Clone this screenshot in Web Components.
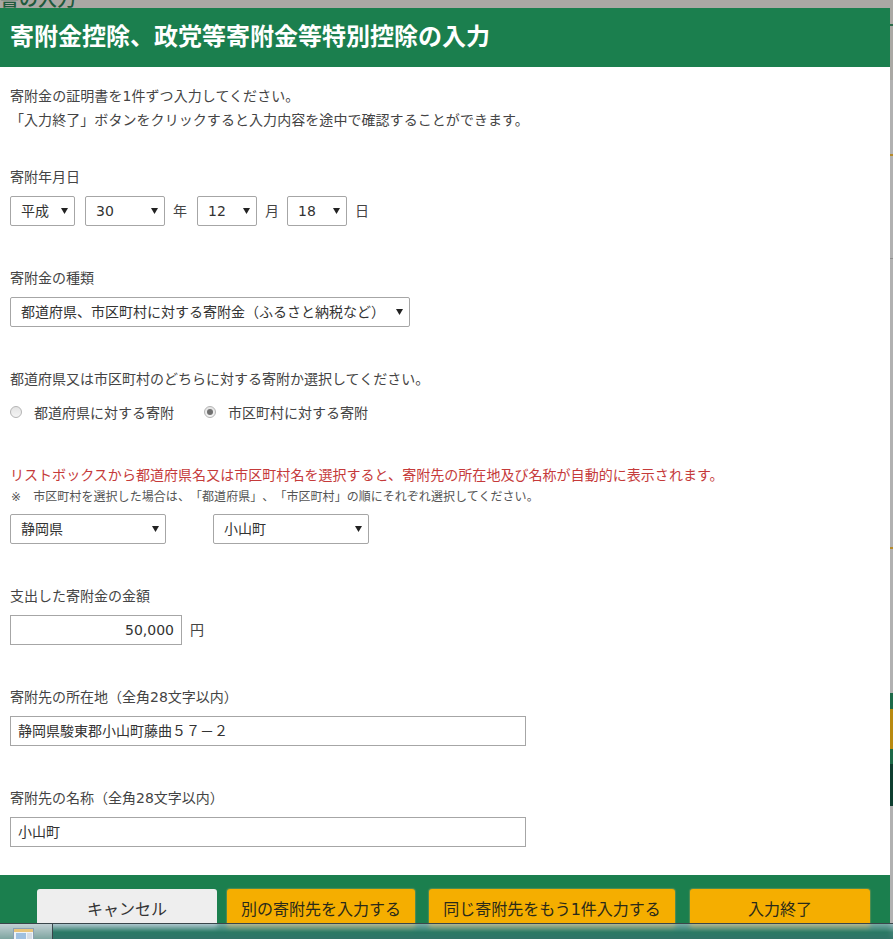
<!DOCTYPE html>
<html lang="ja">
<head>
<meta charset="utf-8">
<title>寄附金控除、政党等寄附金等特別控除の入力</title>
<style>
  html, body { margin: 0; height: 939px; overflow: hidden; background: #aaa8a4; }
  body {
    font-family: "DejaVu Sans", "Noto Sans CJK JP", "Liberation Sans", sans-serif;
    font-size: 14px; color: #444; position: relative;
    text-spacing-trim: space-all;
  }
  .intro { padding-top: 1px; line-height: 24px; margin-bottom: -1px; letter-spacing: .06px; }
</style>
</head>
<body>
<page-shell>
  <tax-dialog heading="寄附金控除、政党等寄附金等特別控除の入力">
    <div class="intro">
      <div>寄附金の証明書を1件ずつ入力してください。</div>
      <div>「入力終了」ボタンをクリックすると入力内容を途中で確認することができます。</div>
    </div>

    <form-field label="寄附年月日" top="33">
      <field-select width="65">平成</field-select>
      <field-select width="80" gap="10">30</field-select>
      <field-unit>年</field-unit>
      <field-select width="60">12</field-select>
      <field-unit after="8">月</field-unit>
      <field-select width="60">18</field-select>
      <field-unit>日</field-unit>
    </form-field>

    <form-field label="寄附金の種類">
      <field-select width="400">都道府県、市区町村に対する寄附金（ふるさと納税など）</field-select>
    </form-field>

    <form-field label="都道府県又は市区町村のどちらに対する寄附か選択してください。" rowgap="10">
      <field-radio>都道府県に対する寄附</field-radio>
      <field-radio checked gap="30">市区町村に対する寄附</field-radio>
    </form-field>

    <form-field label="リストボックスから都道府県名又は市区町村名を選択すると、寄附先の所在地及び名称が自動的に表示されます。"
                note="※　市区町村を選択した場合は、「都道府県」、「市区町村」の順にそれぞれ選択してください。" top="38" tone="alert">
      <field-select width="156">静岡県</field-select>
      <field-select width="156" gap="47">小山町</field-select>
    </form-field>

    <form-field label="支出した寄附金の金額">
      <field-input width="172" align="right">50,000</field-input>
      <field-unit>円</field-unit>
    </form-field>

    <form-field label="寄附先の所在地（全角28文字以内）">
      <field-input width="516">静岡県駿東郡小山町藤曲５７－２</field-input>
    </form-field>

    <form-field label="寄附先の名称（全角28文字以内）">
      <field-input width="516">小山町</field-input>
    </form-field>

    <action-button slot="footer" width="180" kind="cancel">キャンセル</action-button>
    <action-button slot="footer" width="188" gap="10">別の寄附先を入力する</action-button>
    <action-button slot="footer" width="246" gap="14">同じ寄附先をもう1件入力する</action-button>
    <action-button slot="footer" width="180" gap="15">入力終了</action-button>
  </tax-dialog>
</page-shell>
<task-bar></task-bar>

<script>
// ダイアログの後ろに見えているページの切れ端
class PageShell extends HTMLElement {
  constructor() {
    super();
    this.attachShadow({ mode: "open" }).innerHTML = `
      <style>
        :host { display: block; height: 939px; overflow: hidden; }
        .behind { height: 8px; overflow: hidden; background: #aaa8a4; }
        .behind span {
          display: block; margin-top: -13px; line-height: 24px;
          font-size: 19px; font-weight: 500; color: #1e5a3c; white-space: nowrap;
        }
        .main { display: flex; }
        .dialog { width: 890px; flex: none; }
        .edge { width: 3px; margin-top: -8px; background: #b1b1b1; display: flex; flex-direction: column; }
        .edge i { display: block; flex: none; }
      </style>
      <div class="behind"><span>書の入力</span></div>
      <div class="main">
        <div class="dialog"><slot></slot></div>
        <div class="edge">
          <i style="height:24px;background:#aaa8a4"></i>
          <i style="height:2px;background:#2b6a4a"></i>
          <i style="height:54px;background:#aaa8a4"></i>
          <i style="height:74px"></i>
          <i style="height:2px;background:#b58a2a"></i>
          <i style="height:102px"></i>
          <i style="height:1px;background:#8e8e8e"></i>
          <i style="height:288px"></i>
          <i style="height:2px;background:#b58a2a"></i>
          <i style="height:144px"></i>
          <i style="height:16px;background:#1d6a48"></i>
          <i style="height:40px;background:#b88a10"></i>
          <i style="height:15px;background:#1d6a48"></i>
          <i style="height:42px;background:#0f3f30"></i>
        </div>
      </div>
    `;
  }
}

class TaxDialog extends HTMLElement {
  constructor() {
    super();
    this.attachShadow({ mode: "open" }).innerHTML = `
      <style>
        :host { display: block; background: #fff; }
        header {
          height: 59px; box-sizing: border-box; padding-left: 10px;
          background: #1b7f4e; color: #fff;
          font-size: 24px; font-weight: 700; line-height: 58px; white-space: nowrap;
        }
        main { height: 808px; box-sizing: border-box; padding: 16px 10px 0; }
        footer {
          height: 64px; box-sizing: border-box; padding: 14px 0 0 37px;
          background: #1b7f4e; display: flex;
        }
      </style>
      <header></header>
      <main><slot></slot></main>
      <footer><slot name="footer"></slot></footer>
    `;
  }
  connectedCallback() {
    this.shadowRoot.querySelector("header").textContent = this.getAttribute("heading") || "";
  }
}

// ラベル＋コントロール行のひとかたまり
class FormField extends HTMLElement {
  constructor() {
    super();
    this.attachShadow({ mode: "open" }).innerHTML = `
      <style>
        :host { display: block; margin-top: 39px; }
        .label { padding-top: 2px; line-height: 22px; white-space: nowrap; }
        :host([tone="alert"]) .label { color: #c53a3a; letter-spacing: .04px; }
        .note { font-size: 12px; line-height: 16px; margin-top: 3px; color: #555; white-space: nowrap; letter-spacing: .06px; padding-left: 1px; }
        .row { display: flex; align-items: center; margin-top: 8px; }
        :host([tone="alert"]) .row { margin-top: 9px; }
      </style>
      <div class="label"></div>
      <div class="note"></div>
      <div class="row"><slot></slot></div>
    `;
  }
  connectedCallback() {
    const s = this.shadowRoot;
    s.querySelector(".label").textContent = this.getAttribute("label") || "";
    const note = this.getAttribute("note");
    if (note) s.querySelector(".note").textContent = note;
    else s.querySelector(".note").remove();
    if (this.hasAttribute("top")) this.style.marginTop = this.getAttribute("top") + "px";
    if (this.hasAttribute("rowgap")) s.querySelector(".row").style.marginTop = this.getAttribute("rowgap") + "px";
  }
}

class FieldSelect extends HTMLElement {
  constructor() {
    super();
    this.attachShadow({ mode: "open" }).innerHTML = `
      <style>
        :host {
          display: flex; align-items: center; justify-content: space-between; flex: none;
          height: 30px; box-sizing: border-box; padding: 0 6px 0 10px;
          border: 1px solid #a6a6a6; border-radius: 2px; background: #fff;
          white-space: nowrap; color: #333;
        }
        span { line-height: 24px; margin-bottom: 1px; }
        svg { flex: none; margin-bottom: 1px; }
      </style>
      <span><slot></slot></span>
      <svg width="7" height="6" viewBox="0 0 7 6"><path d="M0 0h7L3.5 6z" fill="#222"/></svg>
    `;
  }
  connectedCallback() {
    this.style.width = this.getAttribute("width") + "px";
    if (this.hasAttribute("gap")) this.style.marginLeft = this.getAttribute("gap") + "px";
  }
}

class FieldUnit extends HTMLElement {
  constructor() {
    super();
    this.attachShadow({ mode: "open" }).innerHTML = `
      <style>:host { display: block; flex: none; margin: 0 10px 2px 8px; }</style><slot></slot>
    `;
  }
  connectedCallback() {
    if (this.hasAttribute("after")) this.style.marginRight = this.getAttribute("after") + "px";
  }
}

class FieldRadio extends HTMLElement {
  constructor() {
    super();
    this.attachShadow({ mode: "open" }).innerHTML = `
      <style>
        :host { display: flex; align-items: center; flex: none; height: 24px; white-space: nowrap; color: #444; }
        .dot {
          width: 12px; height: 12px; box-sizing: border-box; margin-right: 12px;
          border: 1px solid #b4b4b4; border-radius: 50%;
          background: linear-gradient(#e4e4e4, #f4f4f4);
          display: flex; align-items: center; justify-content: center;
        }
        :host([checked]) .dot::after {
          content: ""; width: 6px; height: 6px; border-radius: 50%; background: #707070;
        }
      </style>
      <span class="dot"></span><slot></slot>
    `;
  }
  connectedCallback() {
    if (this.hasAttribute("gap")) this.style.marginLeft = this.getAttribute("gap") + "px";
  }
}

class FieldInput extends HTMLElement {
  constructor() {
    super();
    this.attachShadow({ mode: "open" }).innerHTML = `
      <style>
        :host {
          display: block; flex: none; height: 30px; box-sizing: border-box; padding: 0 7px;
          border: 1px solid #a6a6a6; background: #fff; line-height: 28px; color: #333; white-space: nowrap;
        }
        :host([align="right"]) { text-align: right; }
      </style>
      <slot></slot>
    `;
  }
  connectedCallback() {
    this.style.width = this.getAttribute("width") + "px";
  }
}

class ActionButton extends HTMLElement {
  constructor() {
    super();
    this.attachShadow({ mode: "open" }).innerHTML = `
      <style>
        :host {
          display: block; flex: none; height: 40px; box-sizing: border-box;
          background: #f5ae00; border-radius: 3px; color: #2a2a1a;
          font-size: 16px; line-height: 41px; text-align: center; white-space: nowrap;
          box-shadow: 0 0 1px 1px rgba(190,170,90,.35);
        }
        :host([kind="cancel"]) { background: #eeeeee; box-shadow: none; color: #333; }
      </style>
      <slot></slot>
    `;
  }
  connectedCallback() {
    this.style.width = this.getAttribute("width") + "px";
    if (this.hasAttribute("gap")) this.style.marginLeft = this.getAttribute("gap") + "px";
  }
}

// 画面下に重なっている Windows のタスクバー
class TaskBar extends HTMLElement {
  constructor() {
    super();
    this.attachShadow({ mode: "open" }).innerHTML = `
      <style>
        :host {
          position: absolute; left: 0; right: 0; top: 923px; height: 16px; display: flex;
          border-top: 1px solid #39464a; box-sizing: border-box;
          background: linear-gradient(rgba(150,185,195,.75), rgba(45,120,105,.85) 55%, rgba(50,115,105,.95));
          backdrop-filter: blur(2px);
        }
        .start {
          width: 53px; flex: none; box-sizing: border-box; padding: 4px 0 0 13px;
          border-right: 1px solid #39464a;
          background: linear-gradient(#c3d1d5, #7ea5a0);
        }
        svg { display: block; }
      </style>
      <div class="start">
        <svg width="21" height="12" viewBox="0 0 21 12">
          <rect x=".5" y=".5" width="20" height="14" fill="#eef3f8" stroke="#8aa0b4"/>
          <rect x="1" y="1" width="19" height="3" fill="#e8c47a"/>
          <rect x="3" y="5" width="10" height="7" fill="#9fc0e0"/>
          <rect x="14" y="5" width="5" height="7" fill="#d5dde6"/>
        </svg>
      </div>
    `;
  }
}

customElements.define("page-shell", PageShell);
customElements.define("tax-dialog", TaxDialog);
customElements.define("form-field", FormField);
customElements.define("field-select", FieldSelect);
customElements.define("field-unit", FieldUnit);
customElements.define("field-radio", FieldRadio);
customElements.define("field-input", FieldInput);
customElements.define("action-button", ActionButton);
customElements.define("task-bar", TaskBar);
</script>
</body>
</html>
